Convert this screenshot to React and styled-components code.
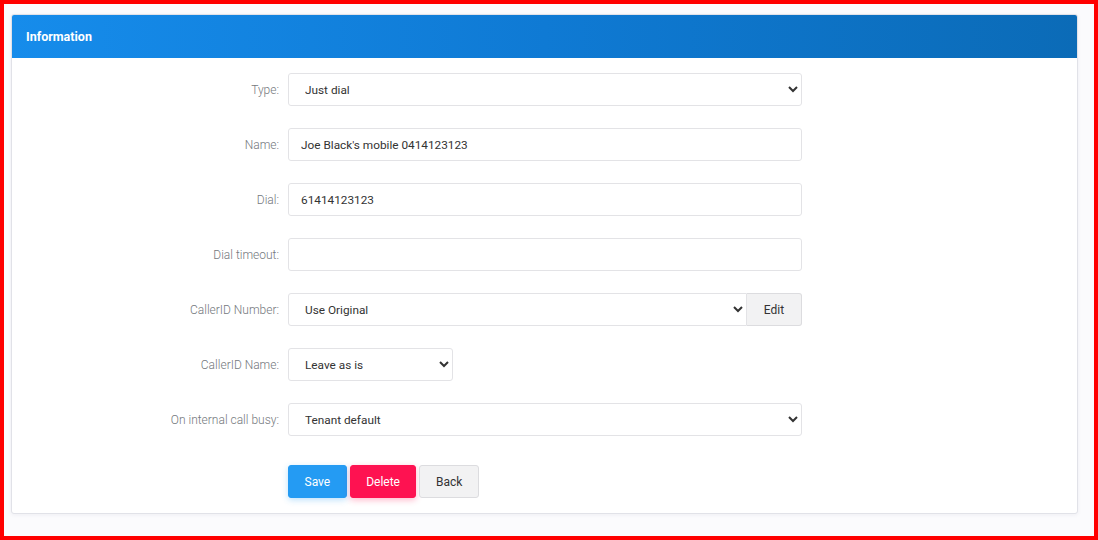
import React from "react";
import styled, { createGlobalStyle } from "styled-components";

const Global = createGlobalStyle`
  html, body { margin: 0; padding: 0; }
  body { font-family: Roboto, "Noto Sans", Arial, sans-serif; background: #fff; }
  * { box-sizing: border-box; }
`;

const Frame = styled.div`
  width: 1098px;
  height: 540px;
  border: 4px solid #ff0000;
  background: #fbfbfd;
  padding: 10px 16px 0 7px;
`;

const Card = styled.section`
  width: 1067px;
  background: #fff;
  border: 1px solid #e1e2e8;
  border-radius: 3px;
  box-shadow: 0 1px 4px rgba(30, 40, 80, 0.06);
  overflow: hidden;
`;

const Header = styled.header`
  height: 44px;
  margin: -1px -1px 0;
  display: flex;
  align-items: center;
  padding: 0 15px;
  background: linear-gradient(90deg, #168ceb 0%, #0f7ad4 50%, #0b6bb7 100%);
  border-radius: 3px 3px 0 0;
  color: #fff;
  font-weight: 700;
  font-size: 12.5px;
`;

const Body = styled.div`
  padding: 15px 0 15px;
  display: flex;
  flex-direction: column;
  gap: 22px;
`;

const Row = styled.div`
  display: grid;
  grid-template-columns: 267px 514px;
  column-gap: 9px;
  align-items: center;
  margin-top: ${(p) => (p.$extra ? "7px" : "0")};
`;

const Label = styled.label`
  text-align: right;
  font-size: 12px;
  font-weight: 300;
  color: #74787d;
`;

const fieldBase = `
  height: 33px;
  border: 1px solid #e3e3e6;
  border-radius: 3px;
  background: #fff;
  font-family: Roboto, "Noto Sans", Arial, sans-serif;
  font-size: 11.8px;
  color: #333;
  padding: 0 12px;
  outline: none;
`;

const Input = styled.input`
  ${fieldBase}
  width: 100%;
`;

const Select = styled.select`
  ${fieldBase}
  width: ${(p) => p.$w || "100%"};
  min-width: 0;
  border-radius: ${(p) => (p.$joined ? "3px 0 0 3px" : "3px")};
`;

const Group = styled.div`
  display: flex;
`;

const AddonButton = styled.button`
  flex: 0 0 55px;
  height: 33px;
  border: 1px solid #dcdcdf;
  border-left: none;
  border-radius: 0 3px 3px 0;
  background: #f2f2f3;
  color: #333;
  font-family: Roboto, "Noto Sans", Arial, sans-serif;
  font-size: 12px;
`;

const Buttons = styled.div`
  display: flex;
  gap: 3px;
`;

const Btn = styled.button`
  height: 33px;
  padding: 0 15.5px;
  border-radius: 3px;
  font-family: Roboto, "Noto Sans", Arial, sans-serif;
  font-size: 12px;
  border: 1px solid ${(p) => p.$border};
  background: ${(p) => p.$bg};
  color: ${(p) => p.$color};
  box-shadow: ${(p) => p.$shadow || "none"};
`;

export default function App() {
  return (
    <>
      <Global />
      <Frame>
        <Card>
          <Header>Information</Header>
          <Body>
            <Row>
              <Label>Type:</Label>
              <Select defaultValue="Just dial">
                <option>Just dial</option>
              </Select>
            </Row>
            <Row>
              <Label>Name:</Label>
              <Input defaultValue="Joe Black's mobile 0414123123" />
            </Row>
            <Row>
              <Label>Dial:</Label>
              <Input defaultValue="61414123123" />
            </Row>
            <Row>
              <Label>Dial timeout:</Label>
              <Input defaultValue="" />
            </Row>
            <Row>
              <Label>CallerID Number:</Label>
              <Group>
                <Select $joined defaultValue="Use Original">
                  <option>Use Original</option>
                </Select>
                <AddonButton>Edit</AddonButton>
              </Group>
            </Row>
            <Row>
              <Label>CallerID Name:</Label>
              <Select $w="165px" defaultValue="Leave as is">
                <option>Leave as is</option>
              </Select>
            </Row>
            <Row>
              <Label>On internal call busy:</Label>
              <Select defaultValue="Tenant default">
                <option>Tenant default</option>
              </Select>
            </Row>
            <Row $extra>
              <span />
              <Buttons>
                <Btn $bg="#249bf3" $border="#249bf3" $color="#fff" $shadow="0 2px 6px rgba(36,155,243,0.3)">Save</Btn>
                <Btn $bg="#fe1251" $border="#fe1251" $color="#fff" $shadow="0 2px 6px rgba(254,18,81,0.3)">Delete</Btn>
                <Btn $bg="#f2f2f3" $border="#dcdcdf" $color="#333">Back</Btn>
              </Buttons>
            </Row>
          </Body>
        </Card>
      </Frame>
    </>
  );
}
